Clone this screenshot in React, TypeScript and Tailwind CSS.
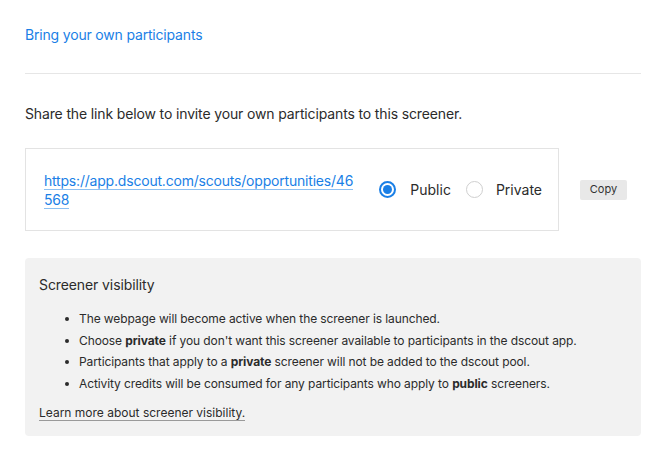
export default function App() {
  return (
    <div
      className="min-h-screen bg-white pl-[25px] pr-[23px] text-[#2b2b2b]"
      style={{ fontFamily: "Inter, 'Noto Sans', sans-serif" }}
    >
      <div className="pt-[22px] pb-[27px]">
        <a
          href="#"
          className="text-[14px] leading-[18px] tracking-[-0.18px] text-[#1a7fe6]"
        >
          Bring your own participants
        </a>
      </div>
      <div className="h-px bg-[#e6e6e6]" />

      <p className="mt-[31px] text-[14px] leading-[18px] tracking-[-0.14px]">
        Share the link below to invite your own participants to this screener.
      </p>

      <div className="mt-[25px] flex items-center">
        <div className="flex h-[83px] w-[534px] items-center border border-[#e3e3e3] pl-[18px] pr-[16px]">
          <div className="w-[313px] text-[14px] leading-[19px] tracking-[-0.2px]">
            <a
              href="#"
              className="break-all border-b border-[#8cc0f2] text-[#1a7fe6]"
            >
              https://app.dscout.com/scouts/opportunities/46568
            </a>
          </div>
          <div className="ml-auto flex items-center text-[14px]">
            <label className="flex items-center">
              <span className="flex h-[17px] w-[17px] items-center justify-center rounded-full border-2 border-[#1a7fe6]">
                <span className="h-[9px] w-[9px] rounded-full bg-[#1a7fe6]" />
              </span>
              <span className="ml-[14px]">Public</span>
            </label>
            <label className="ml-[15px] flex items-center">
              <span className="h-[17px] w-[17px] rounded-full border border-[#cfcfcf]" />
              <span className="ml-[13px]">Private</span>
            </label>
          </div>
        </div>
        <button className="ml-[21px] h-[20px] w-[47px] rounded-[2px] bg-[#e8e8e8] text-[11px] text-[#333]">
          Copy
        </button>
      </div>

      <div className="mt-[27px] rounded-[4px] bg-[#f2f2f2] px-[14px] pt-[18px] pb-[13px]">
        <h3 className="text-[14px] leading-[18px] tracking-[-0.1px]">
          Screener visibility
        </h3>
        <ul className="mt-[17px] pl-[26px] text-[12px] leading-[16px] tracking-[-0.1px]">
          {[
            <>The webpage will become active when the screener is launched.</>,
            <>
              Choose <b>private</b> if you don't want this screener available
              to participants in the dscout app.
            </>,
            <>
              Participants that apply to a <b>private</b> screener will not be
              added to the dscout pool.
            </>,
            <>
              Activity credits will be consumed for any participants who apply
              to <b>public</b> screeners.
            </>,
          ].map((content, i) => (
            <li key={i} className={`flex items-start ${i > 0 ? "mt-[5.5px]" : ""}`}>
              <span className="mt-[6px] h-[4px] w-[4px] shrink-0 rounded-full bg-[#2b2b2b]" />
              <span className="ml-[10px]">{content}</span>
            </li>
          ))}
        </ul>
        <a
          href="#"
          className="mt-[13px] inline-block border-b border-[#9a9a9a] text-[12px] leading-[15px]"
        >
          Learn more about screener visibility.
        </a>
      </div>
    </div>
  );
}
